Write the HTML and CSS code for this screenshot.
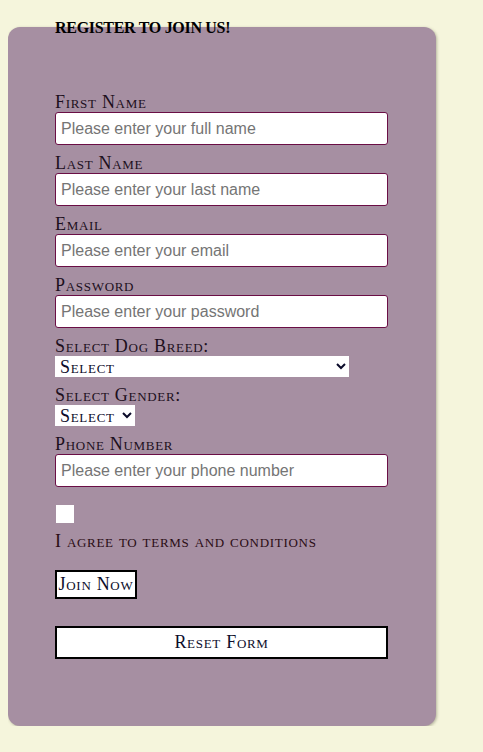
FILE: index.html
```html
<!DOCTYPE html>
<html lang="en">
<head>
<meta charset="utf-8">
<title>Register</title>
<link rel="stylesheet" href="styles.css">
</head>
<body>
<form class="card">
  <h2 class="title">REGISTER TO JOIN US!</h2>
  <label class="lbl" for="fn">First Name</label>
  <input class="field" id="fn" type="text" placeholder="Please enter your full name">
  <label class="lbl" for="ln">Last Name</label>
  <input class="field" id="ln" type="text" placeholder="Please enter your last name">
  <label class="lbl" for="em">Email</label>
  <input class="field" id="em" type="email" placeholder="Please enter your email">
  <label class="lbl" for="pw">Password</label>
  <input class="field" id="pw" type="password" placeholder="Please enter your password">
  <label class="lbl" for="breed">Select Dog Breed:</label>
  <select class="sel sel-wide" id="breed"><option>Select</option></select>
  <label class="lbl" for="gender">Select Gender:</label>
  <select class="sel sel-narrow" id="gender"><option>Select</option></select>
  <label class="lbl" for="ph">Phone Number</label>
  <input class="field" id="ph" type="tel" placeholder="Please enter your phone number">
  <input class="check" id="agree" type="checkbox">
  <label class="lbl agree" for="agree">I agree to terms and conditions</label>
  <button class="btn join" type="submit">Join Now</button>
  <button class="btn reset" type="reset">Reset Form</button>
</form>
</body>
</html>
```
FILE: styles.css
```css
html, body {
  background: #f5f5dc;
}
body {
  margin: 8px;
  font-family: "Liberation Serif", "Times New Roman", serif;
}
.card {
  display: flow-root;
  width: 428px;
  box-sizing: border-box;
  margin-top: 19px;
  padding: 0 48px 67px 47px;
  background: #a68fa2;
  border-radius: 12px;
  box-shadow: 1px 1px 3px rgba(60, 60, 40, 0.35);
}
.title {
  margin: -9px 0 54px 0;
  font-size: 16px;
  line-height: 20px;
  font-weight: bold;
  letter-spacing: -0.3px;
  color: #000;
}
.lbl {
  display: block;
  font-size: 18px;
  line-height: 20px;
  font-variant: small-caps;
  letter-spacing: 0.7px;
  color: #1d0f1d;
}
.field {
  display: block;
  box-sizing: border-box;
  width: 333px;
  height: 33px;
  margin: 0 0 8px 0;
  padding: 0 5px;
  border: 1px solid #6a0e45;
  border-radius: 3px;
  background: #fff;
  font-family: "Liberation Sans", Arial, sans-serif;
  font-size: 16px;
  color: #000;
}
.field::placeholder {
  color: #757575;
}
.sel {
  display: block;
  box-sizing: border-box;
  height: 21px;
  margin: 0 0 8px 0;
  padding: 0 0 0 1px;
  border: none;
  border-radius: 0;
  background-color: #fff;
  font-family: "Liberation Serif", "Times New Roman", serif;
  font-size: 18px;
  line-height: 20px;
  font-variant: small-caps;
  letter-spacing: 0.7px;
  color: #0b0b2a;
}
.sel-wide {
  width: 294px;
}
.sel-narrow {
  width: 80px;
}
.check {
  display: block;
  appearance: none;
  -webkit-appearance: none;
  width: 18px;
  height: 18px;
  margin: 18px 0 8px 1px;
  border: none;
  background: #fff;
}
.agree {
  color: #2a0c14;
}
.btn {
  display: block;
  box-sizing: border-box;
  border: 2px solid #000;
  border-radius: 0;
  background: #fff;
  font-family: "Liberation Serif", "Times New Roman", serif;
  font-size: 18px;
  line-height: 21px;
  font-variant: small-caps;
  letter-spacing: 0.7px;
  color: #0d0d2b;
}
.join {
  margin-top: 19px;
  width: 82px;
  height: 29px;
  padding: 2px 0;
}
.reset {
  margin-top: 27px;
  width: 333px;
  height: 33px;
  padding: 4px;
}
```
